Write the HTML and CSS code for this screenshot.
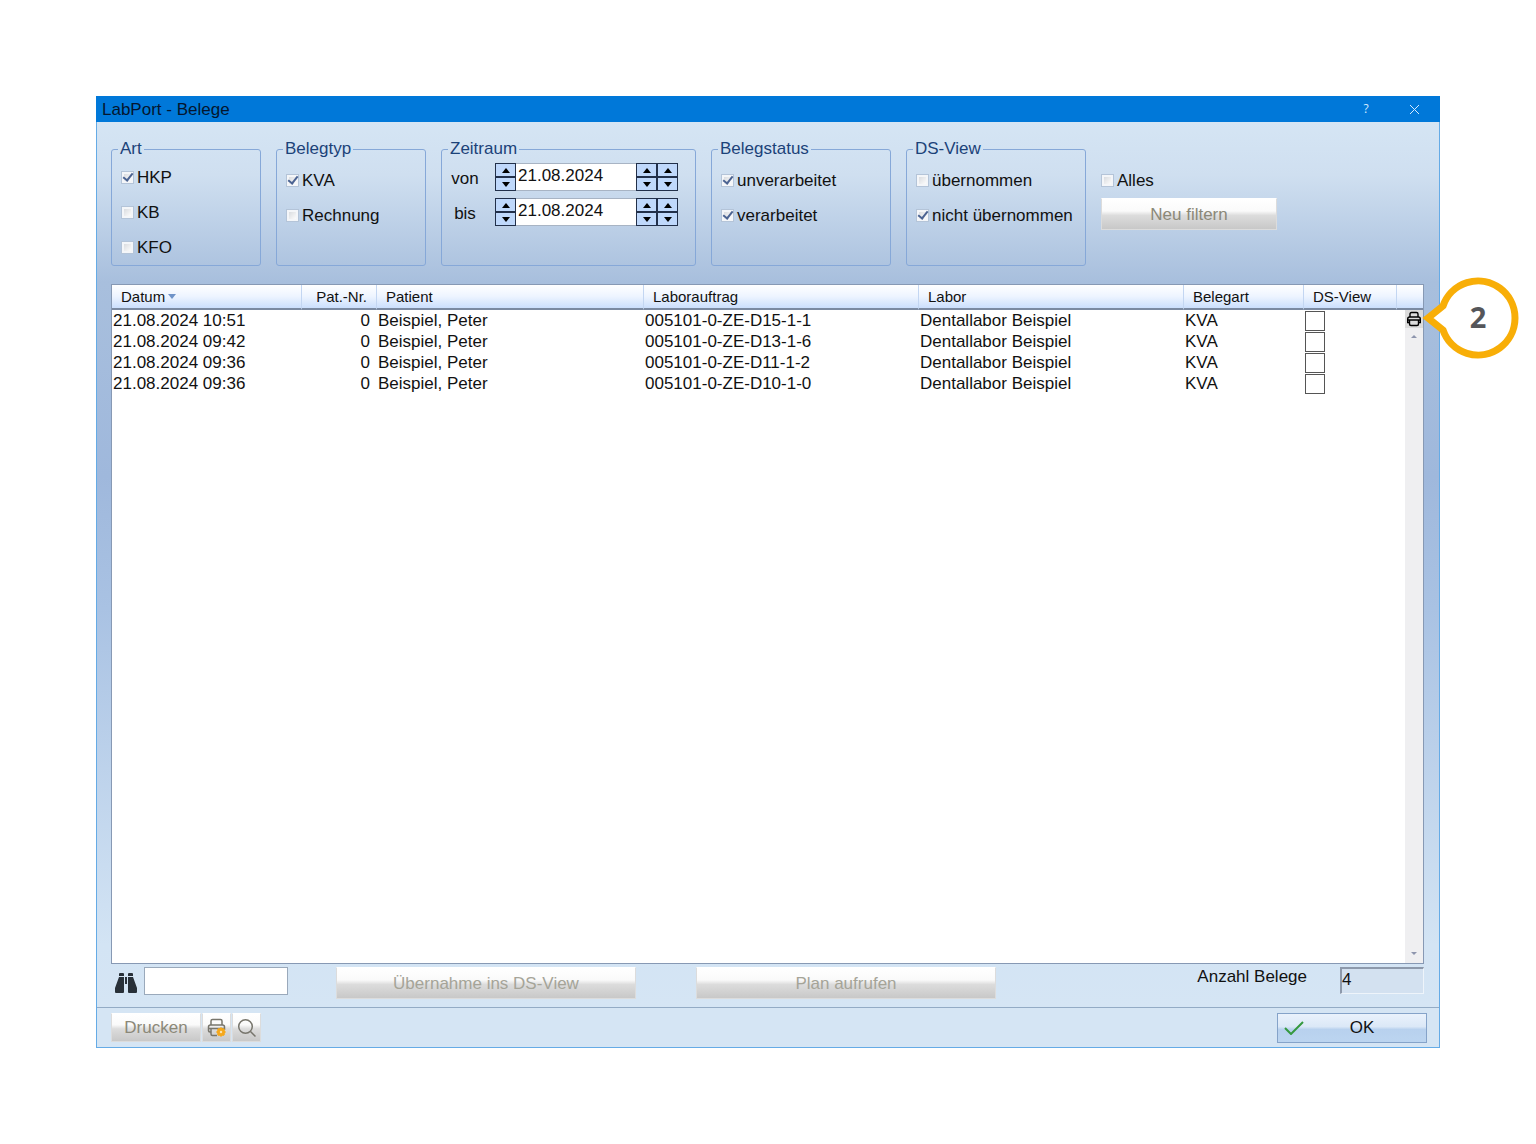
FILE: index.html
```html
<!DOCTYPE html>
<html lang="de">
<head>
    <meta charset="UTF-8">
    <meta name="viewport" content="width=device-width, initial-scale=1.0">
    <title>LabPort - Belege</title>
    <link rel="stylesheet" href="styles.css">
</head>
<body>
    <main class="window">
        <header class="titlebar">
            <h1>LabPort - Belege</h1>
            <button class="title-btn" type="button" aria-label="Hilfe">?</button>
            <button class="title-btn" type="button" aria-label="Schließen">
                <svg width="11" height="11" viewBox="0 0 11 11"><path d="M1 1l9 9M10 1l-9 9"/></svg>
            </button>
        </header>

        <div class="content">
            <form class="filters">
                <fieldset class="group group-small group-art">
                    <legend>Art</legend>
                    <label class="check"><input type="checkbox" checked>HKP</label>
                    <label class="check"><input type="checkbox">KB</label>
                    <label class="check"><input type="checkbox">KFO</label>
                </fieldset>

                <fieldset class="group group-small">
                    <legend>Belegtyp</legend>
                    <label class="check"><input type="checkbox" checked>KVA</label>
                    <label class="check"><input type="checkbox">Rechnung</label>
                </fieldset>

                <fieldset class="group group-date">
                    <legend>Zeitraum</legend>
                    <div class="date-row">
                        <label for="von">von</label>
                        <div class="spin">
                            <button type="button" class="up" aria-label="Tag vor"></button>
                            <button type="button" class="down" aria-label="Tag zurück"></button>
                        </div>
                        <input type="text" id="von" value="21.08.2024">
                        <div class="spin">
                            <button type="button" class="up" aria-label="Monat vor"></button>
                            <button type="button" class="down" aria-label="Monat zurück"></button>
                        </div>
                        <div class="spin">
                            <button type="button" class="up" aria-label="Jahr vor"></button>
                            <button type="button" class="down" aria-label="Jahr zurück"></button>
                        </div>
                    </div>
                    <div class="date-row">
                        <label for="bis">bis</label>
                        <div class="spin">
                            <button type="button" class="up" aria-label="Tag vor"></button>
                            <button type="button" class="down" aria-label="Tag zurück"></button>
                        </div>
                        <input type="text" id="bis" value="21.08.2024">
                        <div class="spin">
                            <button type="button" class="up" aria-label="Monat vor"></button>
                            <button type="button" class="down" aria-label="Monat zurück"></button>
                        </div>
                        <div class="spin">
                            <button type="button" class="up" aria-label="Jahr vor"></button>
                            <button type="button" class="down" aria-label="Jahr zurück"></button>
                        </div>
                    </div>
                </fieldset>

                <fieldset class="group group-medium">
                    <legend>Belegstatus</legend>
                    <label class="check"><input type="checkbox" checked>unverarbeitet</label>
                    <label class="check"><input type="checkbox" checked>verarbeitet</label>
                </fieldset>

                <fieldset class="group group-medium">
                    <legend>DS-View</legend>
                    <label class="check"><input type="checkbox">übernommen</label>
                    <label class="check"><input type="checkbox" checked>nicht übernommen</label>
                </fieldset>

                <div class="filter-all">
                    <label class="check"><input type="checkbox">Alles</label>
                    <button class="btn" type="button" disabled>Neu filtern</button>
                </div>
            </form>

            <section class="list">
                <table>
                    <colgroup>
                        <col class="col-datum">
                        <col class="col-nr">
                        <col class="col-patient">
                        <col class="col-auftrag">
                        <col class="col-labor">
                        <col class="col-art">
                        <col class="col-view">
                        <col class="col-end">
                    </colgroup>
                    <thead>
                        <tr>
                            <th>Datum<span class="sort"></span></th>
                            <th class="num">Pat.-Nr.</th>
                            <th>Patient</th>
                            <th>Laborauftrag</th>
                            <th>Labor</th>
                            <th>Belegart</th>
                            <th>DS-View</th>
                            <th></th>
                        </tr>
                    </thead>
                    <tbody>
                        <tr>
                            <td>21.08.2024 10:51</td>
                            <td class="num">0</td>
                            <td>Beispiel, Peter</td>
                            <td>005101-0-ZE-D15-1-1</td>
                            <td>Dentallabor Beispiel</td>
                            <td>KVA</td>
                            <td><input type="checkbox" class="box" aria-label="DS-View"></td>
                            <td></td>
                        </tr>
                        <tr>
                            <td>21.08.2024 09:42</td>
                            <td class="num">0</td>
                            <td>Beispiel, Peter</td>
                            <td>005101-0-ZE-D13-1-6</td>
                            <td>Dentallabor Beispiel</td>
                            <td>KVA</td>
                            <td><input type="checkbox" class="box" aria-label="DS-View"></td>
                            <td></td>
                        </tr>
                        <tr>
                            <td>21.08.2024 09:36</td>
                            <td class="num">0</td>
                            <td>Beispiel, Peter</td>
                            <td>005101-0-ZE-D11-1-2</td>
                            <td>Dentallabor Beispiel</td>
                            <td>KVA</td>
                            <td><input type="checkbox" class="box" aria-label="DS-View"></td>
                            <td></td>
                        </tr>
                        <tr>
                            <td>21.08.2024 09:36</td>
                            <td class="num">0</td>
                            <td>Beispiel, Peter</td>
                            <td>005101-0-ZE-D10-1-0</td>
                            <td>Dentallabor Beispiel</td>
                            <td>KVA</td>
                            <td><input type="checkbox" class="box" aria-label="DS-View"></td>
                            <td></td>
                        </tr>
                    </tbody>
                </table>
                <div class="scroll">
                    <button class="print-list" type="button" aria-label="Liste drucken">
                        <svg width="16" height="16" viewBox="0 0 16 16">
                            <path d="M4 6V3q0-1.500 1.500-1.500h5Q12 1.500 12 3v3"/>
                            <path d="M3.500 11.500H1.700V8q0-2 2-2h8.600q2 0 2 2v3.500h-1.800"/>
                            <path d="M1.700 9h12.600M3.500 9v4q0 1.500 1.500 1.500h6q1.500 0 1.500-1.500V9"/>
                        </svg>
                    </button>
                    <span class="arrow arrow-up"></span>
                    <span class="arrow arrow-down"></span>
                </div>
            </section>

            <div class="tools">
                <label class="search-label" for="suche" aria-label="Suchen">
                    <svg width="22" height="20" viewBox="0 0 22 20">
                        <path d="M4 1q0-1 1-1h3q1 0 1 1v2H4zM13 1q0-1 1-1h3q1 0 1 1v2h-5z"/>
                        <path d="M4 4h5v15q0 1-1 1H1q-1 0-1-1v-4zM13 4h5l4 11v4q0 1-1 1h-7q-1 0-1-1zM10 4h2v7h-2z"/>
                    </svg>
                </label>
                <input class="search" type="text" id="suche">
                <button class="btn btn-wide" type="button" disabled>Übernahme ins DS-View</button>
                <button class="btn btn-wide" type="button" disabled>Plan aufrufen</button>
                <div class="count">
                    <label for="anzahl">Anzahl Belege</label>
                    <input type="text" id="anzahl" value="4" readonly>
                </div>
            </div>
        </div>

        <footer class="footer">
            <div class="print-group">
                <button class="btn btn-print" type="button" disabled>Drucken</button>
                <button class="btn btn-icon" type="button" disabled aria-label="Druckeinstellungen">
                    <svg width="20" height="20" viewBox="0 0 20 20">
                        <path d="M4 7V3q0-1.500 1.500-1.500h8Q15 1.500 15 3v4"/>
                        <path d="M4 14H3q-1.500 0-1.500-1.500V9q0-2 2-2h12q2 0 2 2v3M1.500 10.500h16M4 10.500V16q0 1.500 1.500 1.500H10"/>
                        <circle class="gear" cx="14" cy="14" r="4"/>
                        <path class="gear-teeth" d="M14 9.500v9M9.500 14h9M10.800 10.800l6.400 6.400M17.200 10.800l-6.400 6.400"/>
                        <circle class="gear-hole" cx="14" cy="14" r="1.200"/>
                    </svg>
                </button>
                <button class="btn btn-icon" type="button" disabled aria-label="Vorschau">
                    <svg width="20" height="20" viewBox="0 0 20 20">
                        <circle cx="8.500" cy="8.500" r="6.800"/>
                        <path d="M13.500 13.500l5 5"/>
                    </svg>
                </button>
            </div>
            <button class="btn-ok" type="button">
                <svg width="20" height="14" viewBox="0 0 20 14"><path d="M1 7l6 6L19 1"/></svg>
                <span>OK</span>
            </button>
        </footer>

        <div class="callout">
            <svg width="100" height="84" viewBox="0 0 100 84">
                <path d="M8 42L23 30A37 37 0 1 1 23 54Z"/>
            </svg>
            <span>2</span>
        </div>
    </main>
</body>
</html>
```
FILE: styles.css
```css
* {
    box-sizing: border-box;
}
body {
    margin: 0;
    padding: 96px;
    min-height: 100vh;
    display: flex;
    background: #fff;
    color: #111;
    font-family: "Liberation Sans", Arial, sans-serif;
    font-size: 17px;
    line-height: 20px;
}
button, input {
    font: inherit;
    color: inherit;
    margin: 0;
    padding: 0;
    border-radius: 0;
}
svg {
    display: block;
    fill: none;
}
.window {
    position: relative;
    flex: 1;
    display: flex;
    flex-direction: column;
    border: 1px solid #65abe6;
    border-top: none;
    background: #d5e5f4;
}

/* Titelleiste */
.titlebar {
    display: flex;
    align-items: center;
    height: 26px;
    margin: 0 -1px;
    padding: 0 2px 0 6px;
    background: #0078d9;
}
.titlebar h1 {
    flex: 1;
    margin: 0;
    font-size: 17px;
    font-weight: normal;
    line-height: 22px;
    padding-top: 2px;
    color: #04162e;
}
.title-btn {
    display: flex;
    align-items: center;
    justify-content: center;
    width: 48px;
    height: 26px;
    border: none;
    background: none;
    color: #d5eaff;
    font-family: "Open Sans", sans-serif;
    font-size: 12px;
}
.title-btn svg {
    stroke: #d5eaff;
}

.content {
    flex: 1;
    display: flex;
    flex-direction: column;
    padding: 17px 15px 8px 14px;
    background: linear-gradient(#d5e5f4 0%, #cfdff0 6%, #a8bfdd 18%, #9fb8dc 40%, #a9c2e3 55%, #d3e4f4 93%, #d5e5f4 100%);
}

/* Filter */
.filters {
    display: flex;
    gap: 15px;
    margin-bottom: 18px;
}
.group {
    height: 127px;
    min-width: 0;
    margin: 0;
    padding: 4px 0 0 9px;
    border: 1px solid #86a8d8;
    border-radius: 3px;
}
.group legend {
    margin-left: -3px;
    padding: 0 2px;
    color: #1c4279;
}
.group-small { width: 150px; }
.group-medium { width: 180px; }
.group-date { width: 255px; }
.group-art { padding-top: 1px; }
.check {
    display: flex;
    align-items: center;
    gap: 3px;
    height: 35px;
}
.check input {
    appearance: none;
    width: 13px;
    height: 13px;
    border: 1px solid #dfe7f0;
    outline: 1px solid #b4c4d8;
    outline-offset: -1px;
    background: linear-gradient(135deg, #d0d3d8, #fbfbfb 80%);
    box-shadow: inset 0 0 0 2px #f4f6f9;
}
.check input:checked {
    display: grid;
    place-items: center;
}
.check input:checked::before {
    content: "";
    width: 8px;
    height: 4px;
    margin-bottom: 3px;
    border-left: 2px solid #4b6392;
    border-bottom: 2px solid #4b6392;
    transform: rotate(-52deg);
}
.date-row {
    display: flex;
    height: 28px;
    margin-bottom: 7px;
}
.date-row label {
    width: 28px;
    margin-right: 16px;
    line-height: 32px;
    text-align: center;
}
.date-row input {
    width: 120px;
    padding: 0 2px 3px;
    border: 1px solid #a8b4c4;
    border-width: 1px 0;
    background: #fff;
}
.spin {
    display: flex;
    flex-direction: column;
    width: 21px;
}
.spin button {
    display: flex;
    align-items: center;
    justify-content: center;
    height: 14px;
    border: 1px solid #22304a;
    background: #bfd8fb;
}
.spin button::before {
    content: "";
    border: 4px solid transparent;
}
.spin .up::before {
    border-top: none;
    border-bottom: 5px solid #000;
}
.spin .down::before {
    border-bottom: none;
    border-top: 5px solid #000;
}
.filter-all {
    display: flex;
    flex-direction: column;
    width: 176px;
    padding-top: 24px;
}

/* Buttons */
.btn {
    height: 32px;
    padding-top: 1px;
    border: 1px solid #dcdcdc;
    border-top-color: #fff;
    background: linear-gradient(#fff 0%, #fafafa 40%, #dcdcdc 55%, #c8c8c8 100%);
    color: #8b8878;
}
.btn-wide {
    width: 300px;
    color: #a5a498;
}
.btn svg {
    stroke: #77756c;
    stroke-width: 1.5;
}

/* Liste */
.list {
    flex: 1;
    display: grid;
    grid-template-columns: 1fr 18px;
    border: 1px solid #8799b4;
    background: #fff;
}
.list table {
    grid-area: 1 / 1 / 2 / 3;
    align-self: start;
    width: 100%;
    table-layout: fixed;
    border-collapse: separate;
    border-spacing: 0;
}
.col-datum { width: 190px; }
.col-nr { width: 75px; }
.col-patient { width: 267px; }
.col-auftrag { width: 275px; }
.col-labor { width: 265px; }
.col-art { width: 120px; }
.col-view { width: 93px; }
.col-end { width: 26px; }
.list th {
    height: 25px;
    padding: 0 9px;
    border-right: 1px solid #c3d6f2;
    border-bottom: 2px solid #7b8aa2;
    background: linear-gradient(#fff 0%, #edf4ff 50%, #cbdffd 100%);
    font-size: 15px;
    font-weight: normal;
    text-align: left;
    white-space: nowrap;
}
.list th:last-child {
    border-right: none;
}
.list td {
    height: 21px;
    padding: 0 0 0 1px;
    line-height: 21px;
    white-space: nowrap;
}
.list .num {
    text-align: right;
}
.list td.num {
    padding-right: 7px;
}
.sort {
    display: inline-block;
    margin-left: 3px;
    border: 4px solid transparent;
    border-top: 5px solid #6f93c8;
    border-bottom: none;
    vertical-align: 3px;
}
.box {
    appearance: none;
    display: block;
    width: 20px;
    height: 20px;
    border: 1px solid #555;
    background: #fff;
}
.scroll {
    grid-area: 1 / 2 / 2 / 3;
    display: flex;
    flex-direction: column;
    align-items: center;
    margin-top: 25px;
    background: #efeff1;
}
.print-list {
    display: flex;
    align-items: center;
    justify-content: center;
    width: 18px;
    height: 18px;
    border: none;
    background: #dcdcdc;
}
.print-list svg {
    stroke: #000;
    stroke-width: 1.4;
}
.arrow {
    border: 3px solid transparent;
}
.arrow-up {
    margin-top: 7px;
    border-top: none;
    border-bottom-color: #8d95ad;
}
.arrow-down {
    margin-top: auto;
    margin-bottom: 8px;
    border-bottom: none;
    border-top-color: #8d95ad;
}

/* Werkzeugleiste unter der Liste */
.tools {
    display: flex;
    align-items: flex-start;
    padding-top: 3px;
}
.search-label {
    width: 33px;
    padding: 6px 0 0 4px;
}
.search-label svg {
    fill: #283038;
}
.search {
    width: 144px;
    height: 28px;
    margin-right: 48px;
    padding: 0 3px;
    border: 1px solid #9aa9bb;
    background: #fff;
}
.btn-wide + .btn-wide {
    margin-left: 60px;
}
.count {
    flex: 1;
    display: flex;
    justify-content: flex-end;
    gap: 33px;
}
.count input {
    width: 84px;
    height: 27px;
    padding-bottom: 3px;
    border: 1px solid #eef4fa;
    border-top: 2px solid #8d99ab;
    border-left: 2px solid #8d99ab;
    background: #d3e1f0;
}

/* Fußleiste */
.footer {
    display: flex;
    justify-content: space-between;
    padding: 5px 12px 4px 14px;
    border-top: 1px solid #93abc5;
    background: #d5e5f4;
}
.print-group {
    display: flex;
    gap: 1px;
}
.print-group .btn {
    height: 29px;
}
.btn-print {
    width: 90px;
}
.btn-icon {
    display: flex;
    align-items: center;
    justify-content: center;
    width: 29px;
}
.btn .gear {
    fill: #f5a81c;
    stroke: none;
}
.btn .gear-teeth {
    stroke: #f5a81c;
    stroke-width: 2;
}
.btn .gear-hole {
    fill: #fbe3b0;
    stroke: none;
}
.btn-ok {
    display: flex;
    align-items: center;
    width: 150px;
    height: 30px;
    padding: 0 6px;
    border: 1px solid #85a3c9;
    background: linear-gradient(#eaf2fc 0%, #dbe8f7 45%, #b8d1ee 55%, #bcd5f0 100%);
}
.btn-ok svg {
    stroke: #35993f;
    stroke-width: 2;
}
.btn-ok span {
    flex: 1;
    text-align: center;
}

/* Hinweisblase am rechten Fensterrand */
.callout {
    position: absolute;
    top: 180px;
    right: -81px;
    width: 100px;
    height: 84px;
}
.callout path {
    fill: #fff;
    stroke: #f8ae07;
    stroke-width: 7;
}
.callout span {
    position: absolute;
    top: 0;
    left: 18px;
    width: 80px;
    line-height: 82px;
    color: #55565a;
    font-family: "Open Sans", sans-serif;
    font-size: 29px;
    font-weight: bold;
    text-align: center;
}
```
